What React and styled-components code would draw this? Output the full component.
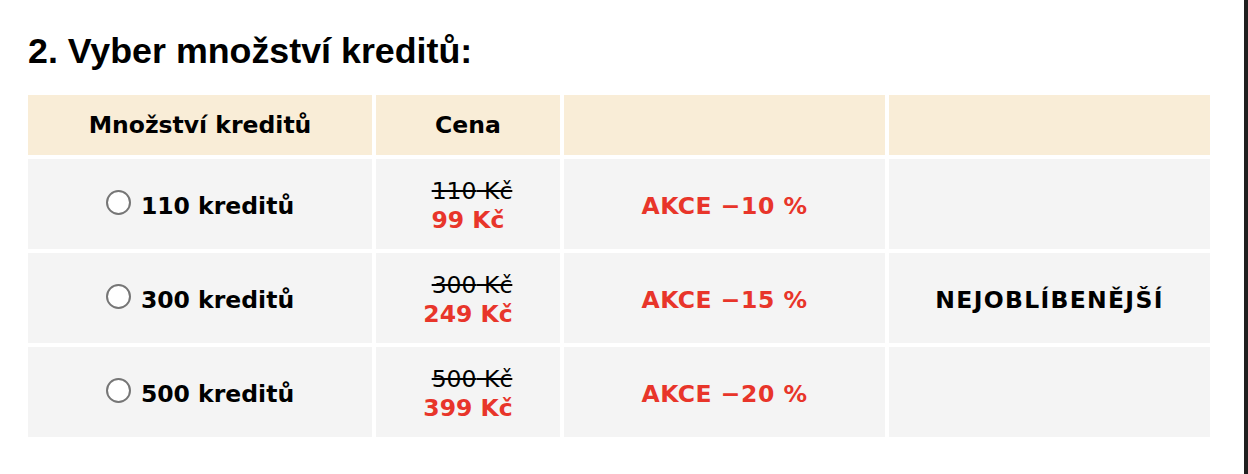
import React from 'react'
import styled, { createGlobalStyle } from 'styled-components'

const GlobalStyle = createGlobalStyle`
  html, body {
    margin: 0;
    padding: 0;
    background: #fff;
  }
`

const Frame = styled.div`
  display: flex;
  width: 1248px;
  height: 474px;
  overflow: hidden;
`

const Page = styled.main`
  flex: 1;
  padding: 31px 0 0 28px;
  background: #fff;
`

const Edge = styled.div`
  width: 4px;
  background: #1f1f1f;
`

const Title = styled.h2`
  margin: 0 0 24px;
  font-family: "Liberation Sans", Arial, sans-serif;
  font-size: 35.8px;
  line-height: 40px;
  font-weight: 700;
  color: #000;
`

const Grid = styled.div`
  display: grid;
  grid-template-columns: 344px 184px 321px 321px;
  grid-template-rows: 60px repeat(3, 90px);
  gap: 4px;
  font-family: "DejaVu Sans", Verdana, sans-serif;
  font-size: 23.5px;
  line-height: 29px;
`

const Cell = styled.div`
  display: flex;
  flex-direction: ${p => (p.$stack ? 'column' : 'row')};
  align-items: center;
  justify-content: center;
  padding-top: ${p => (p.$head ? '0' : '4px')};
  background: ${p => (p.$head ? '#f9edd7' : '#f4f4f4')};
  font-weight: 700;
  color: #000;
`

const Radio = styled.input.attrs({ type: 'radio' })`
  appearance: none;
  width: 25px;
  height: 25px;
  margin: 0 10px 7px 0;
  border: 2px solid #767676;
  border-radius: 50%;
  background: #fff;
  box-sizing: border-box;
`

const OldPrice = styled.span`
  font-weight: 400;
  text-decoration: line-through;
  padding-left: 8px;
`

const NewPrice = styled.span`
  color: #e8352a;
`

const Caps = styled.span`
  letter-spacing: ${p => (p.$red ? '0.5px' : '1.3px')};
  color: ${p => (p.$red ? '#e8352a' : '#000')};
`

const rows = [
  { credits: 110, old: 110, price: 99, sale: 10 },
  { credits: 300, old: 300, price: 249, sale: 15, badge: 'NEJOBLÍBENĚJŠÍ' },
  { credits: 500, old: 500, price: 399, sale: 20 },
]

export default function App() {
  return (
    <Frame>
      <GlobalStyle />
      <Page>
        <Title>2. Vyber množství kreditů:</Title>
        <Grid>
          <Cell $head>Množství kreditů</Cell>
          <Cell $head>Cena</Cell>
          <Cell $head />
          <Cell $head />
          {rows.map(r => (
            <React.Fragment key={r.credits}>
              <Cell>
                <Radio name="credits" />
                {r.credits} kreditů
              </Cell>
              <Cell $stack>
                <OldPrice>{r.old} Kč</OldPrice>
                <NewPrice>{r.price} Kč</NewPrice>
              </Cell>
              <Cell>
                <Caps $red>AKCE −{r.sale} %</Caps>
              </Cell>
              <Cell>{r.badge && <Caps>{r.badge}</Caps>}</Cell>
            </React.Fragment>
          ))}
        </Grid>
      </Page>
      <Edge />
    </Frame>
  )
}
